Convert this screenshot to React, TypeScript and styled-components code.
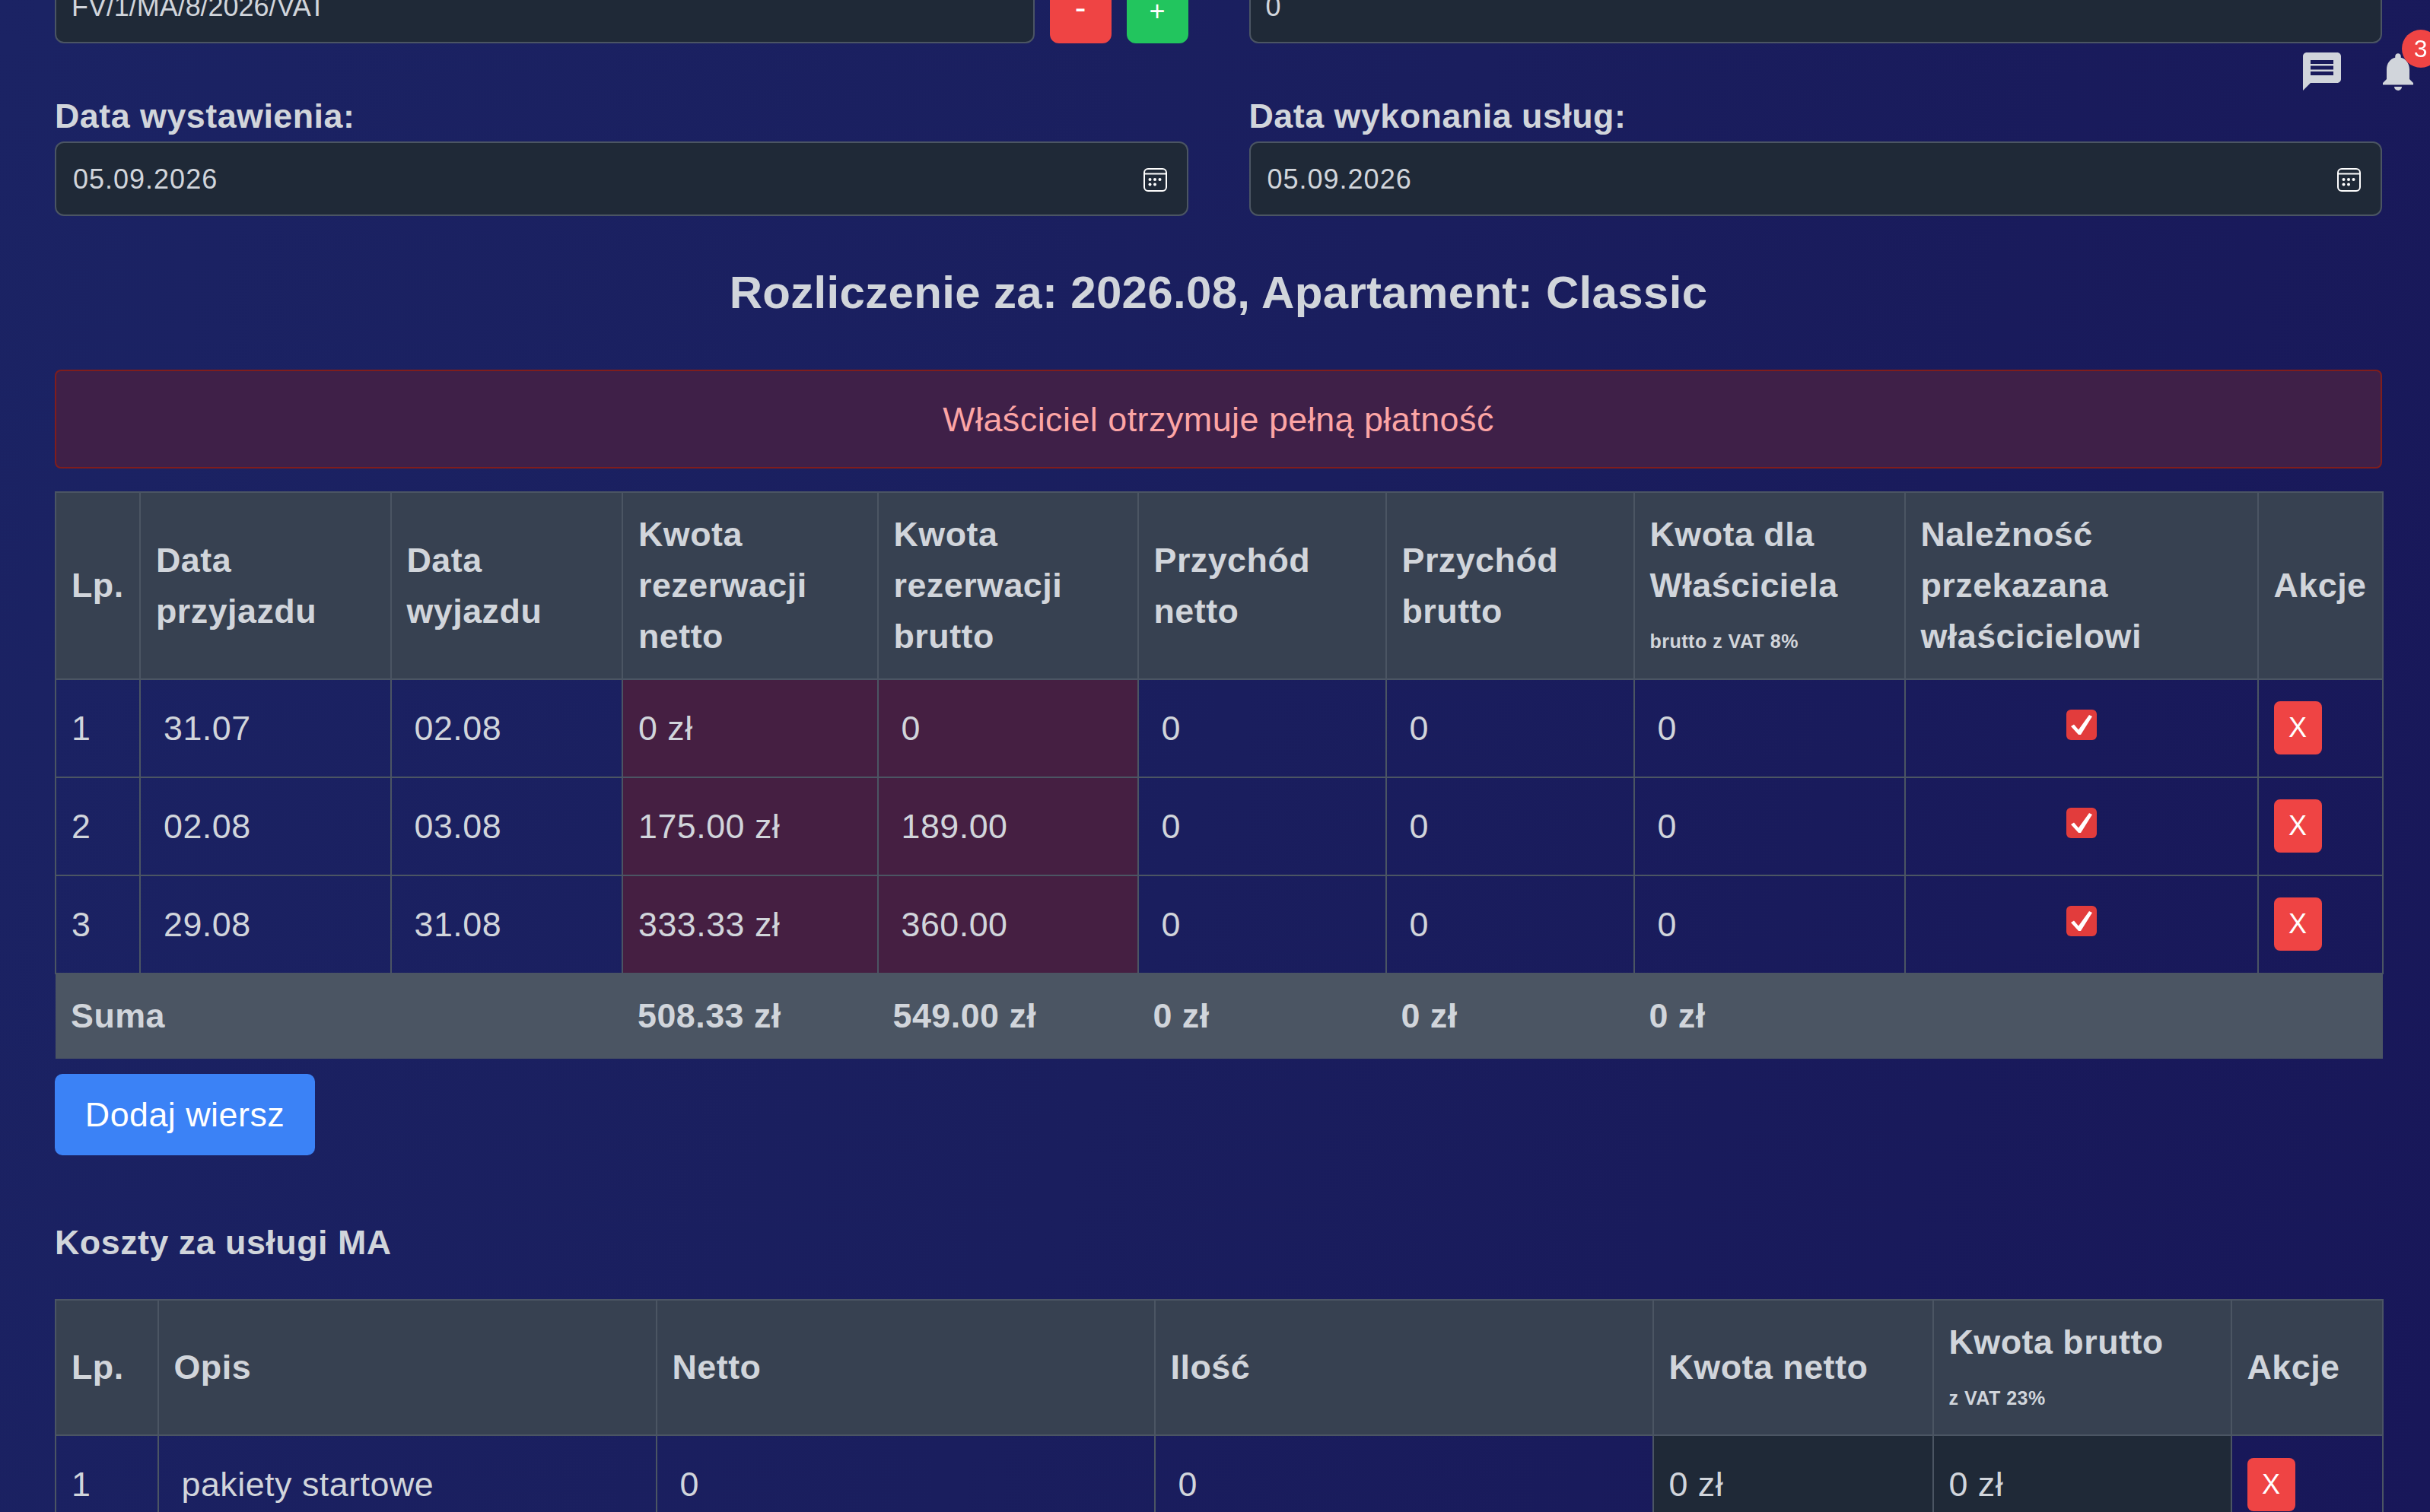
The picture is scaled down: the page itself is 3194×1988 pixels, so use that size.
import React from "react";
import styled, { createGlobalStyle } from "styled-components";
import { MdMessage, MdNotifications } from "react-icons/md";

const GlobalStyle = createGlobalStyle`
  html, body {
    margin: 0;
    height: 1988px;
    overflow: hidden;
  }
  body {
    background: linear-gradient(110deg, #1b2364 0%, #1a1e5e 50%, #181759 100%);
    color: #d1d5db;
    font-family: "Liberation Sans", Arial, sans-serif;
    font-size: 44.8px;
    letter-spacing: 0.5px;
  }
`;

const Page = styled.div`
  margin-top: -41px;
  padding: 0 63px 0 72px;
`;

const FormGrid = styled.div`
  display: grid;
  grid-template-columns: 1fr 1fr;
  column-gap: 80px;
  row-gap: 61px;
`;

const FieldRow = styled.div`
  display: flex;
  align-items: flex-end;
  gap: 20px;
`;

const Label = styled.label`
  display: block;
  font-weight: 700;
  line-height: 68px;
`;

const Field = styled.div<{ $date?: boolean }>`
  flex: 1;
  box-sizing: border-box;
  height: 98px;
  display: flex;
  align-items: center;
  justify-content: space-between;
  padding: 2px 26px 0 ${(p) => (p.$date ? 22 : 20)}px;
  background: #1f2937;
  border: 2px solid #4b5563;
  border-radius: 12px;
  font-size: 36px;
  letter-spacing: ${(p) => (p.$date ? 1 : -0.05)}px;
`;

const StepButton = styled.button<{ $color: string; $size: number; $lift: number }>`
  width: 81px;
  height: 84px;
  border: 0;
  border-radius: 12px;
  background: ${(p) => p.$color};
  color: #fff;
  font-family: inherit;
  font-size: ${(p) => p.$size}px;
  padding: 0 0 ${(p) => p.$lift}px;
`;

const Title = styled.h2`
  margin: 56px 0 0;
  text-align: center;
  font-size: 60px;
  font-weight: 700;
  letter-spacing: 0.32px;
  line-height: 90px;
`;

const Alert = styled.div`
  box-sizing: border-box;
  height: 130px;
  margin-top: 56px;
  display: flex;
  align-items: center;
  justify-content: center;
  background: #3f2048;
  border: 2px solid #7f1d1d;
  border-radius: 8px;
  color: #fca5a5;
`;

const Table = styled.table<{ $top: number }>`
  width: 100%;
  margin-top: ${(p) => p.$top}px;
  table-layout: fixed;
  border-collapse: collapse;
`;

const HeadCell = styled.th`
  padding: 21px 20px;
  background: #374151;
  border: 2px solid #4b5563;
  font-weight: 700;
  line-height: 67.2px;
  text-align: left;
`;

const Small = styled.small`
  font-size: 25px;
  line-height: 1;
`;

const Cell = styled.td<{ $tone?: string }>`
  height: 129px;
  padding: 0 20px;
  box-sizing: border-box;
  background: ${(p) => p.$tone || "transparent"};
  border: 2px solid #4b5563;
`;

const FieldText = styled.span`
  padding-left: 10px;
`;

const SumCell = styled.td`
  height: 112px;
  padding: 0 20px 2px;
  box-sizing: border-box;
  background: #4b5563;
  font-weight: 700;
`;

const Check = styled.div`
  width: 40px;
  height: 40px;
  margin: -8px auto 0;
  border-radius: 6px;
  background: #e23c3c;
  color: #fff;
`;

const RemoveButton = styled.button`
  display: block;
  width: 63px;
  height: 70px;
  padding: 0;
  border: 0;
  border-radius: 8px;
  background: #ef4444;
  color: #fff;
  font-family: inherit;
  font-size: 36px;
`;

const AddButton = styled.button`
  display: block;
  width: 342px;
  height: 107px;
  margin-top: 20px;
  padding: 0;
  border: 0;
  border-radius: 10px;
  background: #3b82f6;
  color: #fff;
  font-family: inherit;
  font-size: 44.8px;
  letter-spacing: 0.5px;
`;

const SectionTitle = styled.h3`
  margin: 81px 0 0;
  font-size: 44.8px;
  font-weight: 700;
  line-height: 67px;
`;

const Icons = styled.div`
  position: fixed;
  top: 64px;
  left: 3022px;
  display: flex;
  gap: 40px;
  color: #d1d5db;
`;

const BellWrap = styled.div`
  position: relative;
  height: 60px;
`;

const Badge = styled.span`
  position: absolute;
  top: -25px;
  left: 35px;
  width: 50px;
  height: 50px;
  border-radius: 50%;
  background: #ef4444;
  color: #fff;
  font-size: 32px;
  line-height: 50px;
  text-align: center;
`;

const pink = "#451f42";
const dark = "#1f2937";

const CalendarIcon = () => (
  <svg width="31" height="31" viewBox="0 0 31 31" fill="none" stroke="#fff" strokeWidth="2">
    <rect x="1" y="1" width="29" height="29" rx="5" />
    <path d="M1 7.5h29" />
    <g fill="#fff" stroke="none">
      <circle cx="8.5" cy="15" r="2" />
      <circle cx="15" cy="15" r="2" />
      <circle cx="21.5" cy="15" r="2" />
      <circle cx="8.5" cy="21.5" r="2" />
      <circle cx="15" cy="21.5" r="2" />
    </g>
  </svg>
);

const CheckMark = () => (
  <svg width="40" height="40" viewBox="0 0 40 40" fill="#fff">
    <path d="M6 21l4-2.5 6 7L30 6l4 2-15 24h-3z" />
  </svg>
);

const stayWidths = [111, 329.5, 304.5, 335.5, 342, 326, 326, 356, 464, 164.5];
const costWidths = [134.5, 655, 655, 655, 368, 392, 199.5];

const stays = [
  { lp: 1, from: "31.07", to: "02.08", net: "0 zł", gross: "0" },
  { lp: 2, from: "02.08", to: "03.08", net: "175.00 zł", gross: "189.00" },
  { lp: 3, from: "29.08", to: "31.08", net: "333.33 zł", gross: "360.00" },
];

const Cols = ({ widths }: { widths: number[] }) => (
  <colgroup>
    {widths.map((w, i) => (
      <col key={i} width={w} />
    ))}
  </colgroup>
);

export default function App() {
  return (
    <>
      <GlobalStyle />
      <Page>
        <FormGrid>
          <FieldRow>
            <Field>FV/1/MA/8/2026/VAT</Field>
            <StepButton $color="#ef4444" $size={44} $lift={11}>-</StepButton>
            <StepButton $color="#22c55e" $size={36} $lift={0}>+</StepButton>
          </FieldRow>
          <FieldRow>
            <Field>0</Field>
          </FieldRow>
          <div>
            <Label>Data wystawienia:</Label>
            <Field $date>
              05.09.2026
              <CalendarIcon />
            </Field>
          </div>
          <div>
            <Label>Data wykonania usług:</Label>
            <Field $date>
              05.09.2026
              <CalendarIcon />
            </Field>
          </div>
        </FormGrid>

        <Title>Rozliczenie za: 2026.08, Apartament: Classic</Title>
        <Alert>Właściciel otrzymuje pełną płatność</Alert>

        <Table $top={30}>
          <Cols widths={stayWidths} />
          <thead>
            <tr>
              <HeadCell>Lp.</HeadCell>
              <HeadCell>Data przyjazdu</HeadCell>
              <HeadCell>Data wyjazdu</HeadCell>
              <HeadCell>Kwota rezerwacji netto</HeadCell>
              <HeadCell>Kwota rezerwacji brutto</HeadCell>
              <HeadCell>Przychód netto</HeadCell>
              <HeadCell>Przychód brutto</HeadCell>
              <HeadCell>
                Kwota dla Właściciela
                <br />
                <Small>brutto z VAT 8%</Small>
              </HeadCell>
              <HeadCell>Należność przekazana właścicielowi</HeadCell>
              <HeadCell>Akcje</HeadCell>
            </tr>
          </thead>
          <tbody>
            {stays.map((s) => (
              <tr key={s.lp}>
                <Cell>{s.lp}</Cell>
                <Cell><FieldText>{s.from}</FieldText></Cell>
                <Cell><FieldText>{s.to}</FieldText></Cell>
                <Cell $tone={pink}>{s.net}</Cell>
                <Cell $tone={pink}><FieldText>{s.gross}</FieldText></Cell>
                <Cell><FieldText>0</FieldText></Cell>
                <Cell><FieldText>0</FieldText></Cell>
                <Cell><FieldText>0</FieldText></Cell>
                <Cell>
                  <Check><CheckMark /></Check>
                </Cell>
                <Cell>
                  <RemoveButton>X</RemoveButton>
                </Cell>
              </tr>
            ))}
            <tr>
              <SumCell colSpan={3}>Suma</SumCell>
              <SumCell>508.33 zł</SumCell>
              <SumCell>549.00 zł</SumCell>
              <SumCell>0 zł</SumCell>
              <SumCell>0 zł</SumCell>
              <SumCell>0 zł</SumCell>
              <SumCell colSpan={2} />
            </tr>
          </tbody>
        </Table>

        <AddButton>Dodaj wiersz</AddButton>

        <SectionTitle>Koszty za usługi MA</SectionTitle>

        <Table $top={41}>
          <Cols widths={costWidths} />
          <thead>
            <tr>
              <HeadCell>Lp.</HeadCell>
              <HeadCell>Opis</HeadCell>
              <HeadCell>Netto</HeadCell>
              <HeadCell>Ilość</HeadCell>
              <HeadCell>Kwota netto</HeadCell>
              <HeadCell>
                Kwota brutto
                <br />
                <Small>z VAT 23%</Small>
              </HeadCell>
              <HeadCell>Akcje</HeadCell>
            </tr>
          </thead>
          <tbody>
            <tr>
              <Cell>1</Cell>
              <Cell><FieldText>pakiety startowe</FieldText></Cell>
              <Cell><FieldText>0</FieldText></Cell>
              <Cell><FieldText>0</FieldText></Cell>
              <Cell $tone={dark}>0 zł</Cell>
              <Cell $tone={dark}>0 zł</Cell>
              <Cell>
                <RemoveButton>X</RemoveButton>
              </Cell>
            </tr>
          </tbody>
        </Table>
      </Page>

      <Icons>
        <MdMessage size={60} />
        <BellWrap>
          <MdNotifications size={60} />
          <Badge>3</Badge>
        </BellWrap>
      </Icons>
    </>
  );
}
